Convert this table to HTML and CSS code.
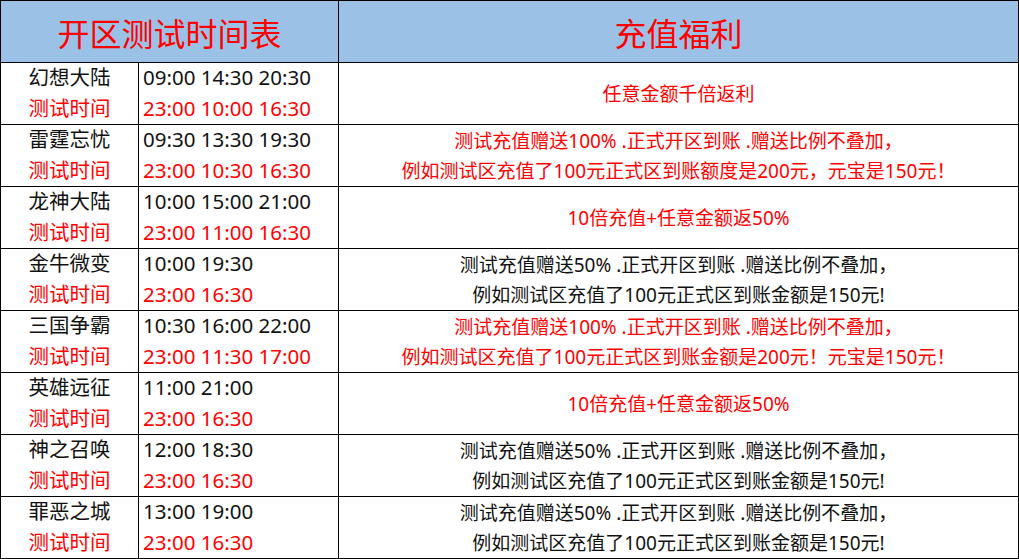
FILE: index.html
```html
<!DOCTYPE html>
<html lang="zh-CN">
<head>
<meta charset="utf-8">
<title>开区测试时间表</title>
<link rel="stylesheet" href="styles.css">
</head>
<body>
<div class="sheet">
  <div class="head head-left">开区测试时间表</div>
  <div class="head">充值福利</div>

  <div class="name"><span>幻想大陆</span><span class="red">测试时间</span></div>
  <div class="times"><span>09:00 14:30 20:30</span><span class="red">23:00 10:00 16:30</span></div>
  <div class="perk red"><span>任意金额千倍返利</span></div>

  <div class="name"><span>雷霆忘忧</span><span class="red">测试时间</span></div>
  <div class="times"><span>09:30 13:30 19:30</span><span class="red">23:00 10:30 16:30</span></div>
  <div class="perk red"><span>测试充值赠送100% .正式开区到账 .赠送比例不叠加，</span><span>例如测试区充值了100元正式区到账额度是200元，元宝是150元！</span></div>

  <div class="name"><span>龙神大陆</span><span class="red">测试时间</span></div>
  <div class="times"><span>10:00 15:00 21:00</span><span class="red">23:00 11:00 16:30</span></div>
  <div class="perk red"><span>10倍充值+任意金额返50%</span></div>

  <div class="name"><span>金牛微变</span><span class="red">测试时间</span></div>
  <div class="times"><span>10:00 19:30</span><span class="red">23:00 16:30</span></div>
  <div class="perk"><span>测试充值赠送50% .正式开区到账 .赠送比例不叠加，</span><span>例如测试区充值了100元正式区到账金额是150元!</span></div>

  <div class="name"><span>三国争霸</span><span class="red">测试时间</span></div>
  <div class="times"><span>10:30 16:00 22:00</span><span class="red">23:00 11:30 17:00</span></div>
  <div class="perk red"><span>测试充值赠送100% .正式开区到账 .赠送比例不叠加，</span><span>例如测试区充值了100元正式区到账金额是200元！元宝是150元！</span></div>

  <div class="name"><span>英雄远征</span><span class="red">测试时间</span></div>
  <div class="times"><span>11:00 21:00</span><span class="red">23:00 16:30</span></div>
  <div class="perk red"><span>10倍充值+任意金额返50%</span></div>

  <div class="name"><span>神之召唤</span><span class="red">测试时间</span></div>
  <div class="times"><span>12:00 18:30</span><span class="red">23:00 16:30</span></div>
  <div class="perk"><span>测试充值赠送50% .正式开区到账 .赠送比例不叠加，</span><span>例如测试区充值了100元正式区到账金额是150元!</span></div>

  <div class="name"><span>罪恶之城</span><span class="red">测试时间</span></div>
  <div class="times"><span>13:00 19:00</span><span class="red">23:00 16:30</span></div>
  <div class="perk"><span>测试充值赠送50% .正式开区到账 .赠送比例不叠加，</span><span>例如测试区充值了100元正式区到账金额是150元!</span></div>
</div>
</body>
</html>
```
FILE: styles.css
```css
html, body {
  margin: 0;
  padding: 0;
  background: #fff;
}
body {
  font-family: "Noto Sans", "Noto Sans CJK SC", sans-serif;
  color: #111;
}
.sheet {
  width: 1019px;
  box-sizing: border-box;
  background: #000;
  padding: 1px;
  display: grid;
  grid-template-columns: 137px 199px 679px;
  grid-auto-rows: 61px;
  gap: 1px;
}
.head {
  background: #9bc2e6;
  color: #ff0000;
  font-size: 32px;
  display: flex;
  align-items: center;
  justify-content: center;
}
.head-left {
  grid-column: 1 / 3;
}
.name, .times, .perk {
  background: #fff;
  display: flex;
  flex-direction: column;
  justify-content: center;
}
.name {
  align-items: center;
  font-size: 20.5px;
  line-height: 31px;
  padding-bottom: 2px;
}
.times {
  align-items: flex-start;
  padding-left: 4px;
  font-size: 20.5px;
  line-height: 31px;
  padding-bottom: 2px;
}
.perk {
  align-items: center;
  font-size: 19px;
  line-height: 30px;
}
.red {
  color: #ff0000;
}
```
